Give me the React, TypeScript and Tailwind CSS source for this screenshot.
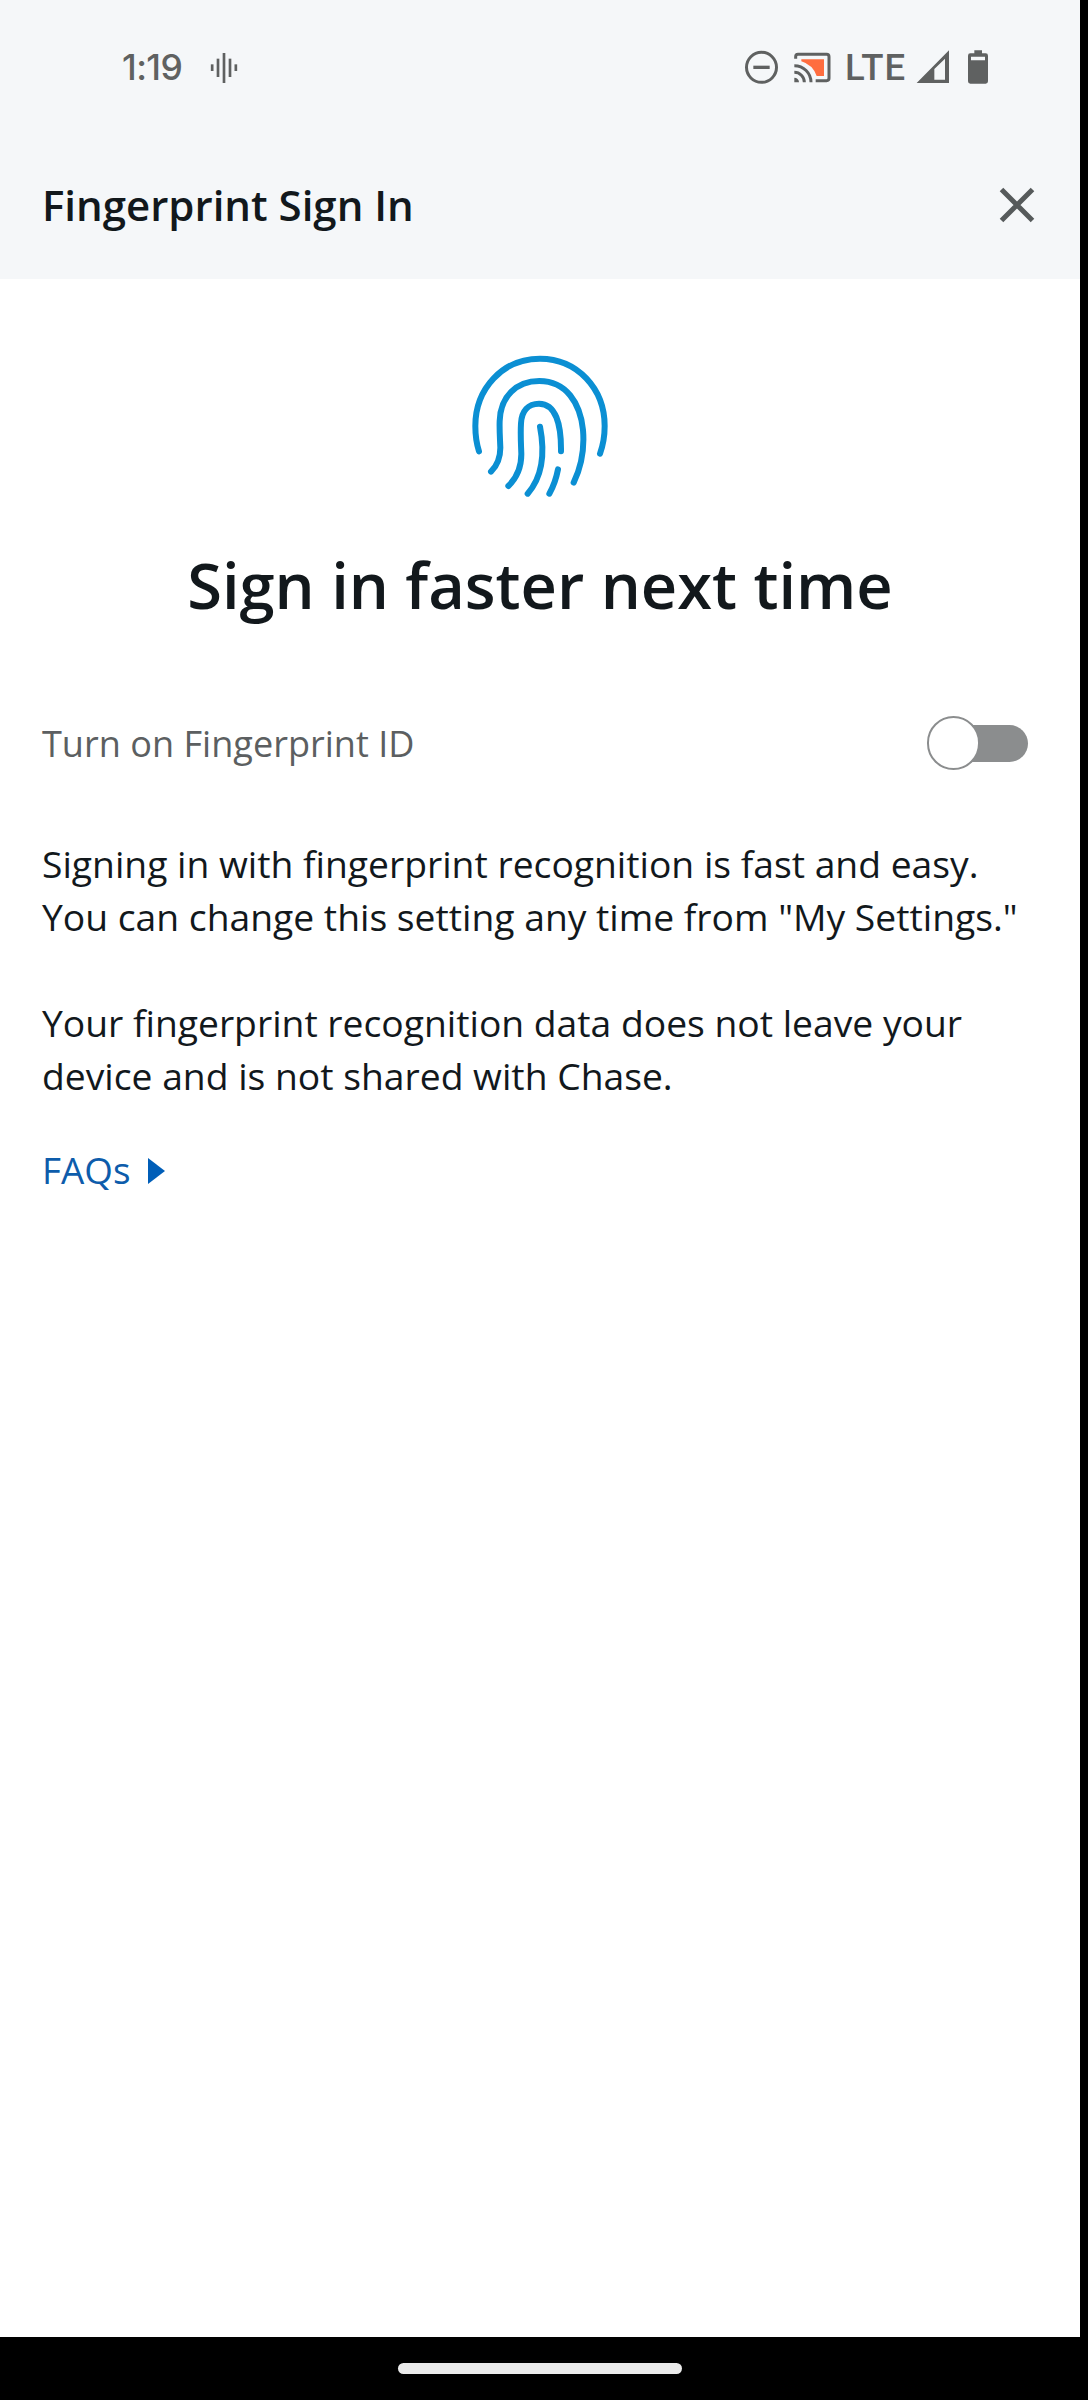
function StatusBar() {
  return (
    <div className="flex h-[130px] items-center pt-[4px] pl-[122px] pr-[91px] text-[#5f6161]">
      <span className="w-[88px] pt-[2px] font-['Inter',sans-serif] text-[35.5px] leading-[40px] font-medium tracking-[-0.6px]">1:19</span>
      <svg className="h-10 w-7" viewBox="330 51 84 120" fill="currentColor">
        <rect x="332.500" y="103" width="8" height="20" />
        <rect x="350" y="86" width="8" height="55" />
        <rect x="368" y="69" width="8" height="90" />
        <rect x="386" y="86" width="8" height="55" />
        <rect x="403.500" y="103" width="8" height="20" />
      </svg>
      <svg className="ml-auto h-10 w-[35px]" viewBox="72 51 105 120" fill="none" stroke="currentColor">
        <circle cx="124.500" cy="112" r="45" strokeWidth="9" />
        <path d="M100 112H149" strokeWidth="10" />
      </svg>
      <svg className="ml-[14px] h-10 w-[39px]" viewBox="219 51 117 120" fill="none" stroke="currentColor" strokeWidth="9">
        <path d="M244 88H312V138H290A70 70 0 0 0 244 94Z" fill="#ff6d3f" stroke="none" />
        <path d="M227 86V80Q227 73 234 73H320Q327 73 327 80V145Q327 152 320 152H287" />
        <path d="M223 107A50 50 0 0 1 273 157M223 127A30 30 0 0 1 253 157" />
        <path d="M223 143A14 14 0 0 1 237 157H223Z" fill="currentColor" stroke="none" />
      </svg>
      <span className="ml-[13px] w-[71px] pt-[2px] font-['Roboto',sans-serif] text-[36.5px] leading-[40px] font-medium tracking-[1px]">LTE</span>
      <svg className="h-10 w-[34px]" viewBox="588 51 102 120" fill="currentColor" fillRule="evenodd">
        <path d="M590 159L687 61V159ZM643 117V149H675V86Z" />
      </svg>
      <svg className="ml-[17px] h-10 w-[22px]" viewBox="741 51 66 120" fill="currentColor" fillRule="evenodd">
        <path d="M763 61H786V70H797Q804 70 804 77V154Q804 161 797 161H751Q744 161 744 154V77Q744 70 751 70H763ZM753 80V91H795V80Z" />
      </svg>
    </div>
  );
}

function FingerprintIcon() {
  return (
    <svg className="mx-auto h-[170px] w-[180px]" viewBox="0 0 540 510" fill="none" stroke="#0b8fd3" strokeWidth="18" strokeLinecap="round" strokeLinejoin="round">
      <path d="M87 334C79 309 76 284 76 258C76 146 158 56 270 56C382 56 464 146 464 258C464 287 459 316 450 341" />
      <path d="M123 395C143 375 151 350 151 323C150 296 148 271 149 243C151 170 199 123 268 123C349 123 391 190 399 270C404 329 392 384 371 428" />
      <path d="M175 438C202 412 214 383 214 342C213 312 211 284 213 250C215 213 235 191 267 191C317 191 334 252 333 334" />
      <path d="M270 260C286 343 277 411 233 461" />
      <path d="M324 388C319 414 311 438 298 461" />
    </svg>
  );
}

function Toggle() {
  return (
    <button aria-label="Turn on Fingerprint ID" className="flex h-[54px] w-[101px] items-center">
      <span className="h-[54px] w-[53px] shrink-0 rounded-full border-2 border-[#8b8d8e] bg-white" />
      <span className="-ml-[27px] -z-10 h-[37px] w-[75px] shrink-0 rounded-r-full bg-[#8b8d8e]" />
    </button>
  );
}

export default function App() {
  return (
    <div className="h-[2400px] w-[1088px] bg-black font-['Open_Sans',sans-serif] text-[#12181c]">
      <div className="flex h-full w-[1080px] flex-col">
        <header className="h-[279px] bg-[#f5f7f9]">
          <StatusBar />
          <div className="flex h-[149px] items-center justify-between pr-[45px] pl-[42px]">
            <h1 className="text-[42px] leading-[58px] font-semibold">Fingerprint Sign In</h1>
            <svg className="h-9 w-9" viewBox="0 0 36 36" stroke="#565a5b" strokeWidth="5">
              <path d="M2.500 2.500L33.500 33.500M33.500 2.500L2.500 33.500" />
            </svg>
          </div>
        </header>
        <main className="isolate flex-1 bg-white pt-[61px] pl-[42px] pr-[42px]">
          <FingerprintIcon />
          <h2 className="mt-[32px] text-center text-[63.2px] leading-[86px] font-semibold">Sign in faster next time</h2>
          <div className="mt-[88px] -mr-[10px] flex h-[54px] items-center justify-between pr-[20px]">
            <span className="text-[36.1px] leading-[50px] text-[#5c5f61]">Turn on Fingerprint ID</span>
            <Toggle />
          </div>
          <div className="mt-[67px] flex flex-col gap-[53px] text-[37.25px] leading-[53px] whitespace-nowrap">
            <p>
              Signing in with fingerprint recognition is fast and easy.
              <br />
              You can change this setting any time from "My Settings."
            </p>
            <p>
              Your fingerprint recognition data does not leave your
              <br />
              device and is not shared with Chase.
            </p>
          </div>
          <a className="mt-[42px] flex items-center text-[36.8px] leading-[53px] text-[#0d5cab]">
            FAQs
            <svg className="ml-[18px] h-[26px] w-[17px]" viewBox="0 0 17 26" fill="#005eb8">
              <path d="M0 0L17 13L0 26Z" />
            </svg>
          </a>
        </main>
        <footer className="flex h-[63px] items-center justify-center">
          <div className="h-[11px] w-[284px] rounded-full bg-[#ebebeb]" />
        </footer>
      </div>
    </div>
  );
}
